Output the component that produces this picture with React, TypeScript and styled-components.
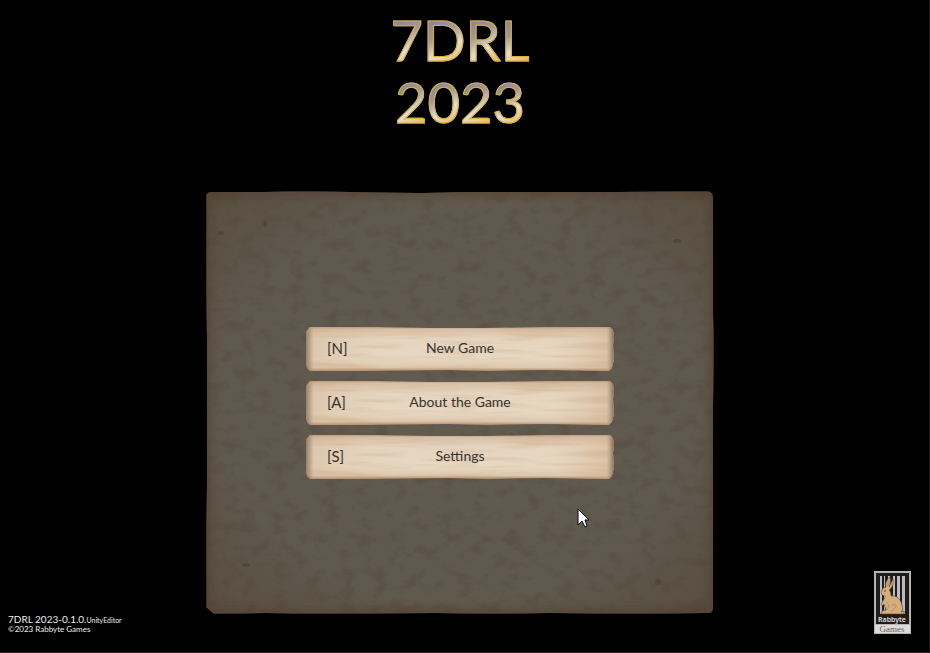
import React from "react";
import styled, { createGlobalStyle } from "styled-components";

const GlobalStyle = createGlobalStyle`
  *, *::before, *::after { box-sizing: border-box; }
  html { background: #000; }
  body {
    margin: 0;
    background: #000;
    font-family: Lato, "Open Sans", sans-serif;
  }
`;

const Screen = styled.div`
  display: grid;
  grid-template-columns: 1fr minmax(0, 508px) 1fr;
  grid-template-rows: auto 1fr;
  grid-template-areas:
    "title title title"
    "version menu logo";
  min-height: 100vh;
  padding: 9px 9px 18px 0;
  background: #000;
  border-right: 1px solid #1c1c1c;
  border-bottom: 1px solid #2a2226;
`;

const Title = styled.h1`
  grid-area: title;
  justify-self: center;
  margin: 0 0 58px;
  text-align: center;
  font-size: 56px;
  font-weight: 400;
  line-height: 62px;
`;

const TitleLine = styled.span`
  display: block;
`;

const Letter = styled.span`
  color: transparent;
  background: linear-gradient(150deg, #8d8592 22%, #a3979a 42%, #e6dcd8 62%, #f2b45c 84%);
  background-clip: text;
  -webkit-background-clip: text;
  -webkit-text-stroke: 1px #d6b52c;
`;

const Panel = styled.main`
  grid-area: menu;
  position: relative;
  isolation: isolate;
  display: flex;
  flex-direction: column;
  justify-content: center;
  margin-bottom: 20px;
  padding: 24px min(100px, 20%);
`;

const Texture = styled.svg`
  position: absolute;
  inset: 0;
  z-index: -1;
  width: 100%;
  height: 100%;
  pointer-events: none;
`;

const Menu = styled.nav`
  display: flex;
  flex-direction: column;
  gap: 10px;
`;

const MenuButton = styled.button`
  position: relative;
  isolation: isolate;
  display: grid;
  grid-template-columns: 40px 1fr 40px;
  align-items: center;
  min-height: 44px;
  padding: 0 21px 2px;
  border: 0;
  background: none;
  color: #38322d;
  font-family: inherit;
  font-size: 14px;
  font-weight: 400;
  line-height: 20px;
  text-align: center;
  cursor: inherit;
`;

const Hotkey = styled.kbd`
  font-family: inherit;
  font-size: 15px;
  text-align: left;
`;

const Version = styled.footer`
  grid-area: version;
  align-self: end;
  padding-left: 8px;
  color: #eee;
  font-size: 8px;
  font-weight: 400;
  line-height: 9px;
  white-space: nowrap;
`;

const Build = styled.span`
  display: block;
  font-size: 10px;
`;

const Suffix = styled.small`
  font-size: 7px;
`;

const Logo = styled.svg`
  grid-area: logo;
  place-self: end;
  width: 37px;
  height: 63px;
  margin-right: 9px;
`;

const Pointer = styled.svg`
  position: absolute;
  left: 73%;
  top: 75%;
  width: 13px;
  height: 20px;
  pointer-events: none;
`;

function StoneTexture() {
  return (
    <Texture viewBox="0 0 508 422" preserveAspectRatio="none" aria-hidden="true">
      <defs>
        <clipPath id="stone-shape">
          <path d="M5 1 L60 1 L95 0 L145 1 L215 2 L255 1 L330 1 L410 1 L500 0 Q507 0 507 7 L507 75 L507 120 L508 155 L507 215 L507 300 L507 360 L507 416 Q507 421 502 421 L420 422 L345 421 L285 422 L230 421 L110 422 L60 421 L8 422 L0 415 L0 350 L1 290 L1 215 L1 150 L0 85 L0 6 Q0 1 5 1Z" />
        </clipPath>
        <radialGradient id="stone-color" cx="50%" cy="50%" r="72%">
          <stop offset="0" stopColor="#625b50" />
          <stop offset=".65" stopColor="#60594e" />
          <stop offset="1" stopColor="#584c3f" />
        </radialGradient>
        <filter id="stone-mottle" x="0" y="0" width="100%" height="100%" colorInterpolationFilters="sRGB">
          <feTurbulence type="fractalNoise" baseFrequency=".06 .085" numOctaves="4" seed="8" />
          <feColorMatrix values="0 0 0 0 .31  0 0 0 0 .26  0 0 0 0 .2  4 0 0 0 -2" />
        </filter>
        <filter id="stone-edge" x="-10%" y="-10%" width="120%" height="120%">
          <feGaussianBlur stdDeviation="4" />
        </filter>
      </defs>
      <g clipPath="url(#stone-shape)">
        <rect width="508" height="422" fill="url(#stone-color)" />
        <rect width="508" height="422" filter="url(#stone-mottle)" opacity=".25" />
        <rect width="508" height="422" rx="5" fill="none" stroke="#503d2c" strokeWidth="7" opacity=".75" filter="url(#stone-edge)" />
        <rect x=".5" y=".5" width="507" height="421" rx="5" fill="none" stroke="#352a20" opacity=".7" />
        <g fill="#51402f" opacity=".7">
          <ellipse cx="59" cy="33" rx="2" ry="3" />
          <ellipse cx="15" cy="42" rx="3" ry="2" />
          <ellipse cx="471" cy="50" rx="4" ry="2" />
          <ellipse cx="40" cy="373" rx="4" ry="2" />
          <ellipse cx="452" cy="390" rx="3" ry="3" />
        </g>
      </g>
    </Texture>
  );
}

function ParchmentTexture({ id }: { id: string }) {
  return (
    <Texture viewBox="0 0 306 44" preserveAspectRatio="none" aria-hidden="true">
      <defs>
        <clipPath id={`${id}-shape`}>
          <path d="M4 0 L70 0 L122 1 L178 1 L240 0 L302 0 L305 3 L306 10 L305 18 L306 32 L304 41 L301 44 L235 43 L180 44 L142 43 L60 44 L4 44 L1 41 L0 35 L0 5Z" />
        </clipPath>
        <linearGradient id={`${id}-vertical`} x2="0" y2="1">
          <stop offset="0" stopColor="#b8957a" />
          <stop offset=".05" stopColor="#d8bfa5" />
          <stop offset=".28" stopColor="#e5d5c0" />
          <stop offset=".72" stopColor="#e7d8c3" />
          <stop offset=".92" stopColor="#ddc8ae" />
          <stop offset="1" stopColor="#a98768" />
        </linearGradient>
        <linearGradient id={`${id}-sides`}>
          <stop offset="0" stopColor="#8b745e" stopOpacity=".9" />
          <stop offset=".014" stopColor="#a48a6d" stopOpacity=".6" />
          <stop offset=".026" stopColor="#cfae8c" stopOpacity=".35" />
          <stop offset=".25" stopColor="#d5b695" stopOpacity="0" />
          <stop offset=".8" stopColor="#d5b695" stopOpacity="0" />
          <stop offset=".975" stopColor="#cfac88" stopOpacity=".4" />
          <stop offset="1" stopColor="#766654" stopOpacity=".95" />
        </linearGradient>
        <filter id={`${id}-grain`} x="0" y="0" width="100%" height="100%" colorInterpolationFilters="sRGB">
          <feTurbulence type="fractalNoise" baseFrequency=".015 .18" numOctaves="3" seed="4" />
          <feColorMatrix values="0 0 0 0 .78  0 0 0 0 .62  0 0 0 0 .46  2.5 0 0 0 -1.15" />
        </filter>
      </defs>
      <g clipPath={`url(#${id}-shape)`}>
        <rect width="306" height="44" fill={`url(#${id}-vertical)`} />
        <rect width="306" height="44" fill={`url(#${id}-sides)`} />
        <rect width="306" height="44" filter={`url(#${id}-grain)`} opacity=".3" />
      </g>
    </Texture>
  );
}

function RabbyteLogo() {
  return (
    <Logo viewBox="0 0 37 63" role="img" aria-label="Rabbyte Games">
      <rect width="37" height="63" fill="#b8b5b0" />
      <rect x="2" y="2" width="33" height="51" fill="#211c1a" />
      <g fill="#b9bcc2">
        <rect x="6" y="5" width="2" height="38" />
        <rect x="10" y="5" width="1" height="38" />
        <rect x="14" y="5" width="2" height="38" />
        <rect x="19" y="5" width="2" height="38" />
        <rect x="23" y="5" width="3" height="38" />
        <rect x="28" y="5" width="3" height="38" />
      </g>
      <path
        d="M12 16C11 12 13 8 16 6C17 10 16 13 15 16L19 8C20 13 18 17 15 19C17 21 17 23 17 25C23 24 27 29 28 34C29 37 29 40 27 41L30 40L30 43H7L8 40L12 39L10 33L8 35L7 33L10 28C12 25 11 25 8 24L7 21L9 17Z"
        fill="#d6ad7d"
        stroke="#56422f"
        strokeWidth=".6"
      />
      <path d="M17 35Q22 31 22 36Q19 39 17 41M12 31L15 34L13 39M14 9V15" fill="none" stroke="#a07c56" strokeWidth=".6" />
      <circle cx="11" cy="20" r=".7" fill="#33261c" />
      <text x="18" y="51" fill="#eeeae2" fontFamily='"Open Sans", sans-serif' fontSize="7" fontWeight="600" textAnchor="middle">Rabbyte</text>
      <rect x="1" y="54" width="35" height="8" fill="#dedcda" />
      <text x="18" y="61" fill="#666360" fontFamily='"Liberation Serif", serif' fontSize="9" textAnchor="middle">Games</text>
    </Logo>
  );
}

const titleLines = ["7DRL", "2023"];

const items = [
  { hotkey: "N", label: "New Game" },
  { hotkey: "A", label: "About the Game" },
  { hotkey: "S", label: "Settings" },
];

export default function App() {
  return (
    <>
      <GlobalStyle />
      <Screen>
        <Title>
          {titleLines.map((line) => (
            <TitleLine key={line}>
              {line.split("").map((letter, index) => (
                <Letter key={index}>{letter}</Letter>
              ))}
            </TitleLine>
          ))}
        </Title>
        <Panel>
          <StoneTexture />
          <Menu aria-label="Main menu">
            {items.map(({ hotkey, label }) => (
              <MenuButton key={hotkey} type="button">
                <ParchmentTexture id={`parchment-${hotkey}`} />
                <Hotkey>[{hotkey}]</Hotkey>
                <span>{label}</span>
              </MenuButton>
            ))}
          </Menu>
          <Pointer viewBox="0 0 13 20" aria-hidden="true">
            <path d="M1 1V17L5 13L8 19L10 18L8 12H12Z" fill="#fff" stroke="#090b18" />
          </Pointer>
        </Panel>
        <Version>
          <Build>7DRL 2023-0.1.0.<Suffix>UnityEditor</Suffix></Build>
          ©2023 Rabbyte Games
        </Version>
        <RabbyteLogo />
      </Screen>
    </>
  );
}
